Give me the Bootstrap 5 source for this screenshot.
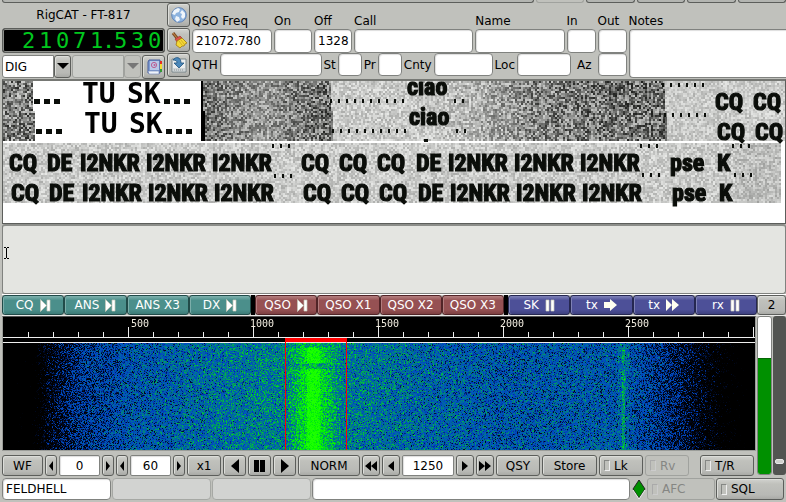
<!DOCTYPE html>
<html lang="en">
<head>
<meta charset="utf-8">
<meta name="viewport" content="width=device-width, initial-scale=1">
<title>fldigi</title>
<link href="https://cdn.jsdelivr.net/npm/bootstrap@5.3.0/dist/css/bootstrap.min.css" rel="stylesheet">
<style>
:root{--face:#c0c1bc;--edge:#5c5e5b;--soft:#80827f}
body{background:var(--face);font:12px/16px "DejaVu Sans",sans-serif;color:#000;overflow-x:hidden}
button,input,select,textarea{font:inherit;color:inherit;margin:0;min-width:0}
.tabs{height:3px;gap:2px;padding-left:2px}
.tabs i{border:1px solid var(--edge);border-top:0;border-radius:0 0 3px 3px;background:#b3b5b1;flex:48 0 0}
.tabs .long{flex-grow:548}.tabs .pale{border-color:#a0a29e;background:var(--face)}
.g1{gap:1px}.g2{gap:2px}.g3{gap:3px}
.field{background:#fff;border:1px solid var(--soft);border-radius:4px;padding:0 3px;height:24px;width:100%;box-shadow:inset 1px 1px 1px #ddd;outline-offset:-1px;display:block}
.r2 .field{height:23px}
.key{background:linear-gradient(#d2d3cf,#c0c1bc 25%,#b8b9b5 80%,#a9aaa6);border:1px solid var(--edge);border-radius:3px;box-shadow:inset 1px 1px 0 #dcddd9;padding:0;height:21px;text-align:center;display:flex;align-items:center;justify-content:center;white-space:nowrap;flex:none}
.tool{width:23px;height:24px}
.dim{border-color:#a0a29e;background:#c0c1bc;color:#858683;box-shadow:none}
.head{height:75px;padding:0 0 0 2px}
.rig{width:163px}
.rigname{height:25px;padding-top:4px}
.freq{background:#000;border:1px solid var(--edge);border-radius:3px;height:25px;box-shadow:0 0 0 1px #8c8e8a inset;color:#00c81e;font:22px/24px "DejaVu Sans Mono",monospace;padding-right:1px}
.freq span{width:17px;display:flex;justify-content:center}.freq .pt{width:7px}
.combos{padding-top:2px}
.combo{position:relative;height:23px;width:69px}
.combo select{appearance:none;width:52px;height:23px;background:#fff;border:1px solid var(--soft);border-radius:3px 0 0 3px;padding:0 2px}
.combo select:disabled{background:#cdcfcb;border-color:#a0a29e;opacity:1}
.combo span{width:17px;height:23px;pointer-events:none}
.w80{width:80px}.w38{width:38px}.w29{width:29px}.w24{width:24px}.w59{width:59px}.w54{width:54px}
.c4{flex:120 1 0}.c5{flex:90 1 0}.qth{flex:106 1 0}
.cap{height:26px;padding-top:10px;white-space:nowrap;display:block}
.notes{flex:158 0 0}.main{flex:436 0 0}
.notes textarea{height:49px;resize:none;border-right:0;border-radius:4px 0 0 4px}
.rx{border:solid var(--edge);border-width:2px 1px 1px;margin:1px 0 0 2px;border-top-color:#767874;background:#fff;height:145px;overflow:hidden;position:relative}
canvas{display:block;width:100%}
.over{position:absolute;left:0;top:0;width:100%;height:100%;overflow:hidden}
.hell{font:bold 24px "Roboto Condensed","DejaVu Sans Condensed",sans-serif;fill:#0b0e0a;stroke:#0b0e0a;stroke-width:1.2}
.hell .wide{font:bold 28px "DejaVu Sans Mono",monospace;stroke:none;fill:#000}
.tx{margin-left:2px;position:relative;border:1px solid var(--soft);border-top:2px solid #8c8e8a;height:70px;border-radius:3px}
.tx textarea{background:#e4e5e1;border:0;width:100%;height:67px;display:block;resize:none;border-radius:3px;padding:4px 14px}
.beam{position:absolute;left:0;top:21px}
.macros{border-top:1px solid #fff;border-bottom:1px solid #e8e8e6;margin-left:2px;height:22px}
.macro{flex:1 1 0;color:#fff;gap:6px}
.macros .key{height:20px}
.teal{background:linear-gradient(#80b2ae,#4b8f8b 25%,#4b8f8b 75%,#3c7b77);border-color:#214b49;box-shadow:inset 1px 0 #7caeaa}
.red{background:linear-gradient(#b58181,#965153 25%,#965153 75%,#7d4042);border-color:#512427;box-shadow:inset 1px 0 #b27d7e}
.blue{background:linear-gradient(#8083b8,#4d5098 25%,#4d5098 75%,#3e417f);border-color:#252750;box-shadow:inset 1px 0 #7e81b5}
.bar{width:4px;background:#000}
.wf{background:#000;border:1px solid #9b9d99;border-top-color:#555;height:135px;margin-left:2px;position:relative}
.lab{font:10px "DejaVu Sans Mono",monospace;fill:#f1ece0}
.meter{width:15px;height:159px;border:1px solid var(--soft);border-radius:3px;background:#fff;overflow:hidden}
.level{background:#009000;border:solid #066506;border-width:1px 0 0}
.gain{appearance:none;writing-mode:vertical-lr;width:13px;height:159px;background:#525451;border-radius:3px;flex:none}
.gain::-webkit-slider-thumb{appearance:none;width:9px;height:5px;background:#d0d1cd;border:1px solid #e8e8e8;border-radius:2px;margin:0 2px}
.ctl{padding:4px 2px 0;height:25px}
.ctl .field,.ctl .key{height:21px}
.ctl .field{text-align:center;padding:0;border-radius:2px;flex:none}
.n12{width:12px}.n18{width:18px}.n23{width:23px}.n41{width:41px}.n34{width:34px}.n44{width:44px}.n52{width:52px}.n55{width:55px}.n62{width:62px}.n68{width:68px}
.tick{justify-content:flex-start;padding-left:4px;gap:4px;margin:0}
.tick input{appearance:none;width:6px;height:11px;border:1px solid #858784;border-right-color:#eee;border-bottom-color:#eee;background:#c0c1bc}
.tick.dim input{border-color:#aaa #ccc #ccc #aaa}
.status{padding:2px 2px 2px}
.status .field,.status .key{height:22px}
.off{background:#d2d3d1!important;border-color:#a6a8a4;box-shadow:none}
.s109{flex:109 0 0}.s99{flex:99 0 0}.s319{flex:319 0 0}
svg{flex:none}
</style>
<script src="https://cdn.jsdelivr.net/npm/bootstrap@5.3.0/dist/js/bootstrap.bundle.min.js"></script>
</head>
<body>
<svg class="d-none">
<symbol id="left" viewBox="0 0 6 10"><path d="M5 0v10L1 5z"/></symbol>
<symbol id="right" viewBox="0 0 6 10"><path d="M1 0v10l4-5z"/></symbol>
<symbol id="pause" viewBox="0 0 10 13"><path fill="#fff" stroke="#c8c8b8" stroke-width=".7" d="M1 1h3v11H1zM6 1h3v11H6z"/></symbol>
<symbol id="next" viewBox="0 0 11 13"><path fill="#fff" stroke="#c8c8b8" stroke-width=".7" d="M.5.5l6 6-6 6zM7 1h3v11H7z"/></symbol>
<symbol id="down" viewBox="0 0 12 7"><path d="M0 0h12L6 6z"/></symbol>
</svg>
<div class="tabs d-flex"><i class="long"></i><i class="pale"></i><i></i><i></i><i></i><i></i></div>

<header class="head d-flex g2">
  <section class="rig flex-shrink-0">
    <div class="text-center rigname">RigCAT - FT-817</div>
    <div class="freq d-flex justify-content-end"><span>2</span><span>1</span><span>0</span><span>7</span><span>1</span><span class="pt">.</span><span>5</span><span>3</span><span>0</span></div>
    <div class="combos d-flex g1">
      <div class="combo"><select aria-label="Mode"><option>DIG</option></select><span class="key position-absolute top-0 end-0"><svg width="12" height="7"><use href="#down"/></svg></span></div>
      <div class="combo"><select aria-label="Bandwidth" disabled><option></option></select><span class="key dim position-absolute top-0 end-0"><svg width="12" height="7" fill="#777"><use href="#down"/></svg></span></div>
      <button class="key tool" aria-label="Logbook"><svg width="18" height="18"><path d="M4 2h11v13H3V4z" fill="#7f9cd0" stroke="#485f9c"/><path d="M5 3h9v9H5z" fill="#b9c9e8"/><path d="M3 13h11v3H4z" fill="#eef3fb" stroke="#6a80b4" stroke-width=".6"/><circle cx="9" cy="7" r="2.6" fill="none" stroke="#bd5d91"/><circle cx="9.5" cy="7" r="1" fill="#bd5d91"/><path d="M15 3h2v3h-2z" fill="#e82c20"/><path d="M15 6h2v5h-2z" fill="#f4dc32"/><path d="M15 11h2v3h-2z" fill="#393"/></svg></button>
    </div>
  </section>
  <section class="d-flex flex-column flex-shrink-0 g1">
    <button class="key tool" aria-label="Look up"><svg width="18" height="18"><circle cx="9" cy="9" r="7.3" fill="#8db3df" stroke="#6386b7"/><path d="M4 4l4-2 2 1-1 3-3 1-1 2-3-1zM12 4l3 3v4l-2 2-2-2 1-3-2-1zM6 10l3 1 1 3-3 2-2-3z" fill="#eff5fb"/></svg></button>
    <button class="key tool" aria-label="Clear"><svg width="18" height="18"><path d="M3 2l4 5" stroke="#7e4b22" stroke-width="3"/><path d="M3 2l4 5" stroke="#c98e4e"/><path d="M5 8l5-3 2 2-5 4z" fill="#d9534a" stroke="#9b2720" stroke-width=".6"/><path d="M7 10l5-3 5 5-2 1-1 2-2 0-2 2-4-3z" fill="#f4d836" stroke="#a17a0b" stroke-width=".8"/><path d="M9 10l3 4M11 9l3 4" stroke="#c89e1c" stroke-width=".7"/></svg></button>
    <button class="key tool" aria-label="Save"><svg width="18" height="18"><path d="M2 3h14v13H2z" fill="#eceeee" stroke="#78868b"/><path d="M3 12h12v3H3z" fill="#cfd4d6"/><path d="M4 14h5M10 14h4" stroke="#8c9699" stroke-dasharray="1 1"/><path d="M3 4c3-4 8-3 8 3h3l-5 5-5-5h3c0-2-1-3-4-3z" fill="#4b88ba" stroke="#22547d" stroke-width=".8"/></svg></button>
  </section>
  <section class="main">
    <div class="d-flex g2">
      <label class="w80"><span class="cap">QSO Freq</span><input class="field" value="21072.780"></label>
      <label class="w38"><span class="cap">On</span><input class="field"></label>
      <label class="w38"><span class="cap">Off</span><input class="field pe-0" value="1328"></label>
      <label class="c4"><span class="cap">Call</span><input class="field"></label>
      <label class="c5"><span class="cap">Name</span><input class="field"></label>
      <label class="w29"><span class="cap">In</span><input class="field"></label>
      <label class="w29"><span class="cap">Out</span><input class="field"></label>
    </div>
    <div class="r2 d-flex g2 align-items-center">
      <label for="qth">QTH</label><div class="qth"><input id="qth" class="field"></div>
      <label for="st">St</label><div class="w24"><input id="st" class="field"></div>
      <label for="pr">Pr</label><div class="w24"><input id="pr" class="field"></div>
      <label for="cnty">Cnty</label><div class="w59"><input id="cnty" class="field"></div>
      <label for="loc">Loc</label><div class="w54"><input id="loc" class="field"></div>
      <label for="az" class="ps-1 pe-1">Az</label><div class="w29"><input id="az" class="field"></div>
    </div>
  </section>
  <label class="notes"><span class="cap">Notes</span><textarea class="field"></textarea></label>
</header>

<div class="rx"><canvas id="tape" height="142"></canvas><svg class="over hell" id="tapeText"></svg></div>
<div class="tx"><textarea aria-label="Transmit text"></textarea><svg class="beam" width="7" height="12" stroke="#000" fill="none"><path d="M1 .5h2M4 .5h2M3.5 1v10M1 11.5h2M4 11.5h2"/></svg></div>

<div class="macros d-flex">
  <button class="key macro teal">CQ <svg width="11" height="13"><use href="#next"/></svg></button>
  <button class="key macro teal">ANS <svg width="11" height="13"><use href="#next"/></svg></button>
  <button class="key macro teal">ANS X3</button>
  <button class="key macro teal">DX <svg width="11" height="13"><use href="#next"/></svg></button>
  <i class="bar"></i>
  <button class="key macro red">QSO <svg width="11" height="13"><use href="#next"/></svg></button>
  <button class="key macro red">QSO X1</button>
  <button class="key macro red">QSO X2</button>
  <button class="key macro red">QSO X3</button>
  <i class="bar"></i>
  <button class="key macro blue">SK <svg width="10" height="13"><use href="#pause"/></svg></button>
  <button class="key macro blue">tx <svg width="13" height="12"><path d="M0 3h6V0l7 6-7 6V9H0z" fill="#fffff0"/></svg></button>
  <button class="key macro blue">tx <svg width="13" height="12"><path d="M0 0l6 6-6 6zM6 0l7 6-7 6z" fill="#fffff0"/></svg></button>
  <button class="key macro blue">rx <svg width="10" height="13"><use href="#pause"/></svg></button>
  <button class="key w29">2</button>
</div>

<main class="d-flex g1">
  <section class="flex-grow-1" style="min-width:0">
    <div class="wf"><canvas id="fall" height="133"></canvas><svg class="over lab" id="scale"></svg></div>
    <div class="ctl d-flex g2">
      <button class="key n41">WF</button>
      <button class="key n12" aria-label="Lower reference"><svg width="6" height="10"><use href="#left"/></svg></button><input class="field n41" aria-label="Reference level" value="0"><button class="key n12" aria-label="Raise reference"><svg width="6" height="10"><use href="#right"/></svg></button>
      <button class="key n12" aria-label="Lower range"><svg width="6" height="10"><use href="#left"/></svg></button><input class="field n41" aria-label="Range" value="60"><button class="key n12" aria-label="Raise range"><svg width="6" height="10"><use href="#right"/></svg></button>
      <button class="key n34">x1</button>
      <button class="key n23" aria-label="Scroll left"><svg width="8" height="14"><path d="M8 0v14L0 7z"/></svg></button>
      <button class="key n23" aria-label="Pause"><svg width="11" height="12"><path d="M0 0h5v12H0zM6 0h5v12H6z"/></svg></button>
      <button class="key n23" aria-label="Scroll right"><svg width="8" height="14"><path d="M0 0v14l8-7z"/></svg></button>
      <button class="key n62">NORM</button>
      <button class="key n18" aria-label="Fast down"><svg width="12" height="10"><path d="M6 0v10L0 5zM12 0v10L6 5z"/></svg></button>
      <button class="key n18" aria-label="Down"><svg width="6" height="10"><path d="M6 0v10L0 5z"/></svg></button>
      <input class="field n52" aria-label="Audio frequency" value="1250">
      <button class="key n18" aria-label="Up"><svg width="6" height="10"><path d="M0 0v10l6-5z"/></svg></button>
      <button class="key n18" aria-label="Fast up"><svg width="12" height="10"><path d="M0 0v10l6-5zM6 0v10l6-5z"/></svg></button>
      <button class="key n44">QSY</button>
      <button class="key n55">Store</button>
      <label class="key tick n44"><input type="checkbox">Lk</label>
      <label class="key tick n44 dim"><input type="checkbox" disabled>Rv</label>
      <label class="key tick w54 ms-auto"><input type="checkbox">T/R</label>
    </div>
  </section>
  <div class="meter d-flex flex-column justify-content-end flex-shrink-0"><div class="level" style="height:74%"></div></div>
  <input class="gain" type="range" min="0" max="100" value="93" aria-label="Squelch level">
</main>

<footer class="status d-flex g1">
  <div class="s109"><input class="field" aria-label="Mode name" value="FELDHELL" readonly></div>
  <div class="s99"><input class="field off" aria-label="Status 1" readonly></div>
  <div class="s99"><input class="field off" aria-label="Status 2" readonly></div>
  <div class="s319"><input class="field" aria-label="Status message" readonly></div>
  <svg width="15" height="22"><path d="M8 2l6 9-6 9-6-9z" fill="#009000" stroke="#222"/><path d="M2 12l6 9 6-9" fill="none" stroke="#eee"/></svg>
  <label class="key tick dim n68"><input type="checkbox" disabled>AFC</label>
  <label class="key tick n68"><input type="checkbox">SQL</label>
</footer>

<script>
let seed = 1;
function rnd(){ seed = (seed * 1664525 + 1013904223) >>> 0; return seed / 4294967296; }
function curve(points, x){
  for (let i = 1; i < points.length; i++) if (x <= points[i][0]) {
    const [a, u] = points[i-1], [b, v] = points[i];
    return u + (v - u) * (x - a) / (b - a);
  }
  return points[points.length-1][1];
}
function text(svg, x, y, s, cls){
  const t = document.createElementNS('http://www.w3.org/2000/svg', 'text');
  t.setAttribute('x', x); t.setAttribute('y', y); t.textContent = s;
  if (cls) t.setAttribute('class', cls);
  svg.append(t);
}
// received Hellschreiber strips: every line is printed twice
function drawTape(){
  const c = document.getElementById('tape'), w = c.width = c.clientWidth, g = c.getContext('2d');
  seed = 7;
  g.fillStyle = '#fff'; g.fillRect(0, 0, w, 142);
  const mean = [[0,125],[200,115],[235,140],[262,155],[290,125],[327,112],[328,202],[420,202],[470,180],[530,130],[600,115],[660,115],[661,200],[786,205]];
  const amp = [[0,170],[200,150],[262,110],[300,150],[327,170],[328,65],[430,65],[530,150],[660,170],[661,55],[786,55]];
  const cell = (x, y, m, a) => { const v = m + (rnd() - .5) * a | 0; g.fillStyle = `rgb(${v},${v+1},${v-1})`; g.fillRect(x, y, 2, 2); };
  for (let y = 0; y < 60; y += 2) for (let x = 0; x < w; x += 2) {
    const s = y < 30 ? 0 : 2;
    if (x >= 29 + s && x < 197) continue;
    if (x < 200 + s && x >= 197) { g.fillStyle = '#000'; g.fillRect(x, y, 2, 2); continue; }
    cell(x, y, curve(mean, x - s), curve(amp, x));
  }
  for (let y = 62; y < 122; y += 2) for (let x = 0; x < w - 4; x += 2) cell(x, y, x > 730 ? 190 : 202, 60);
  g.fillStyle = '#0b0e0a';
  const dots = (x, y, n) => { for (let i = 0; i < n; i++) g.fillRect(x + i * 8, y, 2, 4); };
  dots(327,18,10); dots(329,48,10); dots(451,18,2); dots(453,48,2);
  dots(659,2,6); dots(661,32,6);
  dots(269,63,3); dots(271,93,3); dots(637,63,3); dots(639,92,3); dots(729,63,3); dots(731,92,3);
  for (const k of [0, 1]) for (const x of [31, 41, 51, 161, 171, 181]) g.fillRect(x + 2 * k, 18 + 30 * k, 6, 5);
  g.fillRect(421, 58, 4, 3);
}
const tape = document.getElementById('tapeText');
for (const k of [0, 1]) {
  const d = 2 * k, h = 30 * k;
  text(tape, 79 + d, 22 + h, 'TU', 'wide'); text(tape, 124 + d, 22 + h, 'SK', 'wide');
  text(tape, 404 + d, 14 + h, 'ciao');
  for (const x of [712, 750]) text(tape, x + d, 29 + h, 'CQ');
  for (const [x, s] of [[6,'CQ'],[44,'DE'],[77,'I2NKR'],[143,'I2NKR'],[209,'I2NKR'],[298,'CQ'],[336,'CQ'],[374,'CQ'],[413,'DE'],[445,'I2NKR'],[511,'I2NKR'],[577,'I2NKR'],[667,'pse'],[714,'K']])
    text(tape, x + d, 90 + h, s);
}
// waterfall with its frequency scale: 25px per 100 Hz
function drawFall(){
  const c = document.getElementById('fall'), w = c.width = c.clientWidth, g = c.getContext('2d');
  seed = 99;
  g.fillStyle = '#000'; g.fillRect(0, 0, w, 133);
  const im = g.createImageData(w, 107);
  const prof = [[0,-.4],[28,-.32],[45,.02],[75,.26],[130,.42],[200,.53],[250,.6],[282,.6],[300,.64],[345,.6],[400,.53],[450,.48],[500,.43],[580,.45],[625,.43],[660,.26],[690,.07],[725,-.22],[750,-.4]];
  const ramp = [[0,[0,0,0]],[.16,[0,12,45]],[.34,[0,65,190]],[.52,[0,92,185]],[.68,[0,135,115]],[.85,[0,195,60]],[1,[0,245,0]],[1.3,[30,255,0]]];
  for (let y = 0; y < 107; y++) {
    const gap = (y > 19 && y < 26) || y < 5;
    for (let x = 0; x < w; x++) {
      let v = curve(prof, x) + (rnd() + rnd() - 1) * .4;
      const d = Math.abs(x - 310);
      if (d < 28) v += (1 - d / 28) * (gap ? .18 : .42) + (y % 4 ? 0 : .08);
      if (d < 7 && !gap) v += .18;
      if (Math.abs(x - 620) < 2 && !gap) v += .27; else if (Math.abs(x - 620) < 6) v += .07;
      v = Math.max(0, Math.min(1.29, v));
      let i = 1; while (ramp[i][0] < v) i++;
      const t = (v - ramp[i-1][0]) / (ramp[i][0] - ramp[i-1][0]), o = (y * w + x) * 4;
      for (let k = 0; k < 3; k++) im.data[o+k] = ramp[i-1][1][k] * (1 - t) + ramp[i][1][k] * t;
      im.data[o+3] = 255;
    }
  }
  g.putImageData(im, 0, 26);
  g.fillStyle = '#eee'; g.fillRect(0, 20, w, 1); g.fillRect(0, 25, w, 1);
  for (let i = 1; i * 25 < w; i++) { const h = i % 5 ? 5 : 10; g.fillRect(i * 25, 20 - h, 1, h); }
  g.fillStyle = '#f00'; g.fillRect(282, 21, 62, 4); g.fillRect(282, 25, 1, 108); g.fillRect(343, 25, 1, 108);
}
const scale = document.getElementById('scale');
for (const [x, s] of [[128,'500'],[247,'1000'],[372,'1500'],[497,'2000'],[622,'2500']]) text(scale, x, 10, s);
function draw(){ drawTape(); drawFall(); }
draw(); addEventListener('resize', draw);
</script>
</body>
</html>
